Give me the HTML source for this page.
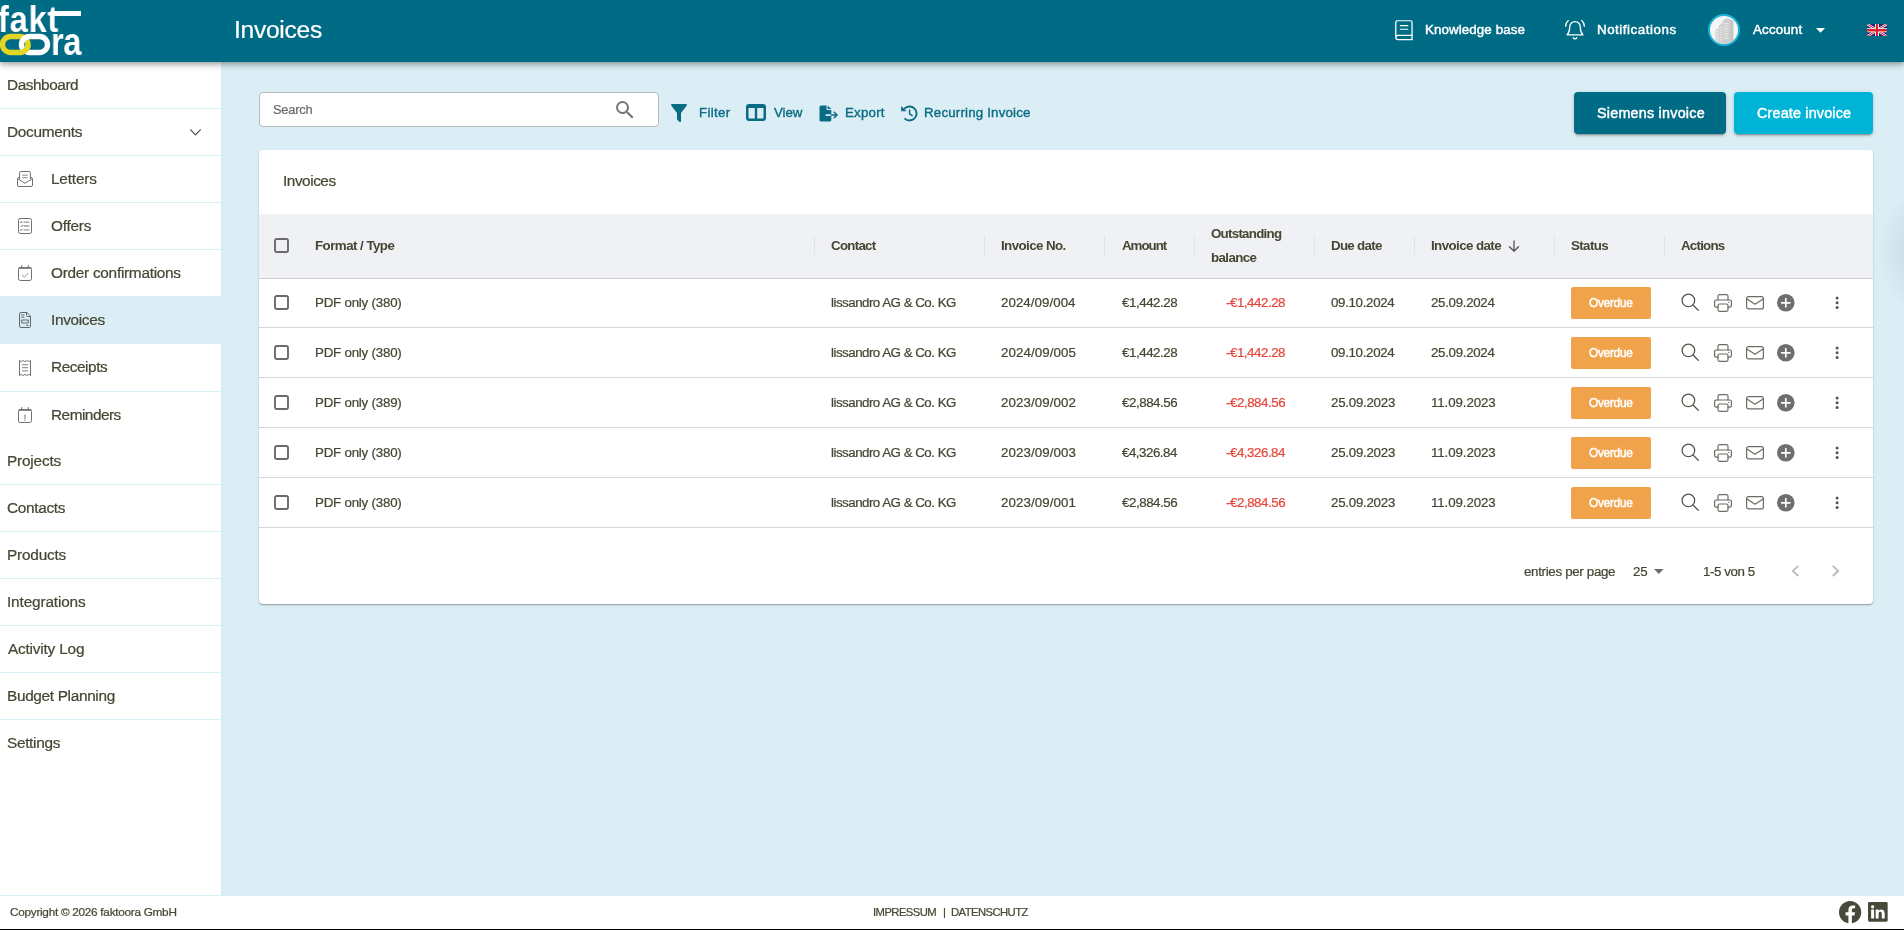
<!DOCTYPE html>
<html lang="en"><head><meta charset="utf-8"><title>Invoices</title>
<style>
*{box-sizing:border-box;margin:0;padding:0}
html,body{width:1904px;height:930px;overflow:hidden;background:#dbeef5;font-family:"Liberation Sans",sans-serif;position:relative}
.a{position:absolute}
.t{will-change:transform;position:absolute;white-space:pre;line-height:1;font-family:"Liberation Sans",sans-serif}
#hdr{left:0;top:0;width:1904px;height:62px;background:#006b84;box-shadow:0 2px 4px -1px rgba(0,0,0,.2),0 4px 5px 0 rgba(0,0,0,.14),0 1px 10px 0 rgba(0,0,0,.12);}
#side{left:0;top:62px;width:222px;height:834px;background:#fff;border-right:1px solid #d4ebf2}
.sl{left:0;width:221px;height:1px;background:#d9edf4}
#sel{left:0;top:296px;width:221px;height:48px;background:#dbeef5}
#foot{left:0;top:895px;width:1904px;height:34px;background:#fff;border-top:1px solid #d9edf4}
#bl{left:0;top:929px;width:1904px;height:1px;background:#000}
#search{left:259px;top:92px;width:400px;height:35px;background:#fff;border:1px solid #b9b9b9;border-radius:4px}
.btn{top:92px;height:42px;border-radius:4px;box-shadow:0 3px 1px -2px rgba(0,0,0,.2),0 2px 2px 0 rgba(0,0,0,.14),0 1px 5px 0 rgba(0,0,0,.12)}
#card{left:259px;top:150px;width:1614px;height:454px;background:#fff;border-radius:4px;box-shadow:0 1px 1px rgba(0,0,0,.28),0 1px 3px rgba(0,0,0,.10)}
#thead{left:259px;top:214px;width:1614px;height:64px;background:#f0f1f4}
.hl{left:259px;width:1614px;height:1px;background:#d6d6d6}
.sep{top:236px;width:1px;height:19px;background:#e2e3e6}
.cb{left:275px;width:15px;height:15px;border:2px solid #55565a;border-radius:2.5px;background:transparent}
.od{left:1571px;width:80px;height:32px;border-radius:2px;background:#f1a34c}
svg{position:absolute;overflow:visible}

</style></head>
<body>
<div class="a" id="side"></div>
<div class="a" id="sel"></div>
<div class="a" id="hdr"></div>
<div class="a" id="foot"></div>
<div class="a" id="bl"></div>
<div class="a" id="search"></div>
<div class="a btn" style="left:1574px;width:152px;background:#006b84"></div>
<div class="a btn" style="left:1734px;width:139px;background:#00b4d8"></div>
<div class="a" id="card"></div>
<div class="a" id="thead"></div>
<div class="a sl" style="top:108px"></div>
<div class="a sl" style="top:155px"></div>
<div class="a sl" style="top:202px"></div>
<div class="a sl" style="top:249px"></div>
<div class="a sl" style="top:391px"></div>
<div class="a sl" style="top:484px"></div>
<div class="a sl" style="top:531px"></div>
<div class="a sl" style="top:578px"></div>
<div class="a sl" style="top:625px"></div>
<div class="a sl" style="top:672px"></div>
<div class="a sl" style="top:719px"></div>

<div class="a hl" style="top:278px;background:#cfcfcf"></div>
<div class="a hl" style="top:327px"></div>
<div class="a hl" style="top:377px"></div>
<div class="a hl" style="top:427px"></div>
<div class="a hl" style="top:477px"></div>
<div class="a hl" style="top:527px"></div>

<div class="a sep" style="left:814px"></div>
<div class="a sep" style="left:984px"></div>
<div class="a sep" style="left:1104px"></div>
<div class="a sep" style="left:1194px"></div>
<div class="a sep" style="left:1314px"></div>
<div class="a sep" style="left:1414px"></div>
<div class="a sep" style="left:1554px"></div>
<div class="a sep" style="left:1664px"></div>


<div class="a od" style="top:287px"></div>
<div class="a od" style="top:337px"></div>
<div class="a od" style="top:387px"></div>
<div class="a od" style="top:437px"></div>
<div class="a od" style="top:487px"></div>

<svg style="left:274.4px;top:238.4px" width="15" height="15" viewBox="0 0 15 15"><rect x="1" y="1" width="13" height="13" rx="1.800" fill="none" stroke="#6a6a6a" stroke-width="1.900"/></svg>
<svg style="left:274.4px;top:295.3px" width="15" height="15" viewBox="0 0 15 15"><rect x="1" y="1" width="13" height="13" rx="1.800" fill="none" stroke="#6a6a6a" stroke-width="1.900"/></svg>
<svg style="left:274.4px;top:345.3px" width="15" height="15" viewBox="0 0 15 15"><rect x="1" y="1" width="13" height="13" rx="1.800" fill="none" stroke="#6a6a6a" stroke-width="1.900"/></svg>
<svg style="left:274.4px;top:395.3px" width="15" height="15" viewBox="0 0 15 15"><rect x="1" y="1" width="13" height="13" rx="1.800" fill="none" stroke="#6a6a6a" stroke-width="1.900"/></svg>
<svg style="left:274.4px;top:445.3px" width="15" height="15" viewBox="0 0 15 15"><rect x="1" y="1" width="13" height="13" rx="1.800" fill="none" stroke="#6a6a6a" stroke-width="1.900"/></svg>
<svg style="left:274.4px;top:495.3px" width="15" height="15" viewBox="0 0 15 15"><rect x="1" y="1" width="13" height="13" rx="1.800" fill="none" stroke="#6a6a6a" stroke-width="1.900"/></svg>
<!-- LOGO -->
<span class="t" style="left:-2px;top:2px;font-size:36px;font-weight:700;color:#fff;transform:scaleX(.9);transform-origin:0 0;line-height:1;letter-spacing:1px" id="lg1">fakt</span>
<div class="a" style="left:52px;top:11px;width:29px;height:4.5px;background:#fff"></div>
<span class="t" style="left:51px;top:22.6px;font-size:38px;font-weight:700;color:#fff;transform:scaleX(.86);transform-origin:0 0;line-height:1;letter-spacing:-.5px" id="lg2">ra</span>
<svg style="left:0;top:30px" width="56" height="30" viewBox="0 30 56 30">
  <rect x="2.5" y="36.5" width="25.5" height="16" rx="8" ry="8" fill="none" stroke="#e2d523" stroke-width="5.4"/>
  <rect x="21.5" y="36.5" width="26" height="16" rx="8" ry="8" fill="none" stroke="#fff" stroke-width="5.4"/>
  <path d="M28 44.5 A8 8 0 0 1 20 52.5" fill="none" stroke="#e2d523" stroke-width="5.4"/>
</svg>

<!-- HEADER: book -->
<svg style="left:1395px;top:20px" width="18.6" height="20.2" viewBox="0 0 19 21.4" preserveAspectRatio="none" fill="none" stroke="#fff" stroke-width="1.3" stroke-linecap="round" stroke-linejoin="round">
  <path d="M.8 17.2V2.6a1.8 1.8 0 0 1 1.8-1.8h13.6a1.2 1.2 0 0 1 1.200 1.200v14.4H3.100a2.200 2.200 0 0 0 0 4.400h14.300"/>
  <path d="M17.400 16.400v4.400"/>
  <path d="M5.500 6h7.600M5.500 9.800h7.600"/>
</svg>
<!-- HEADER: bell -->
<svg style="left:1564px;top:19px" width="22" height="22" viewBox="0 0 22 22" fill="none" stroke="#fff" stroke-width="1.3" stroke-linecap="round" stroke-linejoin="round">
  <path d="M11 2.600c-3.300 0-5.300 2.500-5.300 5.600 0 4.200-1.400 6.400-2.600 7.700h15.800c-1.200-1.300-2.600-3.500-2.600-7.700 0-3.100-2-5.600-5.300-5.600z"/>
  <path d="M9.300 18.700a1.800 1.800 0 0 0 3.400 0"/>
  <path d="M4.300 1.600C2.700 3 1.700 5 1.600 7.200M17.700 1.600c1.600 1.400 2.600 3.400 2.700 5.600"/>
</svg>
<!-- avatar -->
<div class="a" style="left:1708px;top:14px;width:32px;height:32px;border-radius:50%;background:#f6f6f6;border:2px solid #1ab3d6;overflow:hidden">
<svg style="left:0;top:0" width="28" height="28" viewBox="1710 16 28 28">
  <path d="M1715.300 44V29.500l3.900-1.600V44z" fill="#d9d9d9"/>
  <path d="M1718.700 44V25.200l5-2.600V44z" fill="#d2d2d2"/>
  <path d="M1722.600 44V20.500l4.400-2.200 6.300 2.400V44z" fill="#cfcfcf"/>
  <path d="M1727 18.300l6.300 2.400V44H1730V20.200z" fill="#c6c6c6"/>
  <path d="M1716.200 31.500h2M1716.200 33.800h2M1716.200 36.100h2M1716.200 38.400h2M1719.700 27.500h2.600M1719.700 30h2.600M1719.700 32.500h2.600M1719.700 35h2.600M1719.700 37.500h2.600M1719.700 40h2.600M1723.800 23.500h4.500M1723.800 26h4.500M1723.800 28.500h4.500M1723.800 31h4.500M1723.800 33.500h4.500M1723.800 36h4.500M1723.800 38.500h4.500" stroke="#e9e9e9" stroke-width=".9"/>
</svg>
</div>
<!-- account caret -->
<svg style="left:1816px;top:28px" width="9" height="5" viewBox="0 0 9 5"><path d="M0 0h9L4.500 4.800z" fill="#fff"/></svg>
<!-- flag -->
<svg style="left:1867px;top:24px;overflow:hidden" width="20" height="12.400" viewBox="0 0 60 36" preserveAspectRatio="none">
  <rect width="60" height="36" fill="#1b2a7a"/>
  <path d="M0 0L60 36M60 0L0 36" stroke="#fff" stroke-width="7"/>
  <path d="M0 0L60 36M60 0L0 36" stroke="#d8232f" stroke-width="3"/>
  <path d="M30 0V36M0 18H60" stroke="#fff" stroke-width="12"/>
  <path d="M30 0V36M0 18H60" stroke="#d8232f" stroke-width="7"/>
</svg>

<!-- search magnifier (mdi-magnify 24) -->
<svg style="left:613px;top:98.400px" width="24" height="24" viewBox="0 0 24 24"><path fill="#767676" d="M9.500,3A6.500,6.500 0 0,1 16,9.500C16,11.110 15.410,12.590 14.440,13.730L14.710,14H15.500L20.500,19L19,20.500L14,15.500V14.710L13.730,14.440C12.590,15.410 11.110,16 9.500,16A6.500,6.500 0 0,1 3,9.500A6.500,6.500 0 0,1 9.500,3M9.500,5C7,5 5,7 5,9.500C5,12 7,14 9.500,14C12,14 14,12 14,9.500C14,7 12,5 9.500,5Z"/></svg>
<!-- filter (mdi-filter 24) -->
<svg style="left:667px;top:101px" width="24" height="24" viewBox="0 0 24 24"><path fill="#0a6c84" d="M14,12V19.880C14.040,20.180 13.940,20.500 13.710,20.710C13.320,21.100 12.690,21.100 12.300,20.710L10.290,18.700C10.060,18.470 9.960,18.160 10,17.870V12H9.970L4.210,4.620C3.870,4.190 3.950,3.560 4.380,3.220C4.570,3.080 4.780,3 5,3V3H19V3C19.220,3 19.430,3.080 19.620,3.220C20.050,3.560 20.130,4.190 19.790,4.620L14.030,12H14Z"/></svg>
<!-- view columns -->
<svg style="left:745.500px;top:104px" width="20" height="17" viewBox="0 0 20 17"><path fill="#0a6c84" fill-rule="evenodd" d="M3 0h14a3 3 0 0 1 3 3v11a3 3 0 0 1-3 3H3a3 3 0 0 1-3-3V3a3 3 0 0 1 3-3zM2.500 4v9.500a1 1 0 0 0 1 1H8.800V4zM11.200 4v10.500h5.300a1 1 0 0 0 1-1V4z"/></svg>
<!-- export -->
<svg style="left:818.500px;top:104.500px" width="19" height="17" viewBox="0 0 19 17">
<path fill="#0a6c84" d="M2 .5H7.600V4.900H12.300V9.200H6.600V10.900H12.300V15a1.500 1.500 0 0 1-1.500 1.500H2A1.500 1.500 0 0 1 .5 15V2A1.500 1.500 0 0 1 2 .5z"/>
<path fill="#0a6c84" d="M8.600.6 12.200 4H8.600z"/>
<path d="M12.300 10.050H17.300M15.200 7.300 18.100 10.050 15.200 12.800" fill="none" stroke="#0a6c84" stroke-width="1.500" stroke-linecap="round" stroke-linejoin="round"/>
</svg>
<!-- history -->
<svg style="left:900.500px;top:104.800px" width="17" height="17" viewBox="0 0 17 17">
<path d="M3.300 3.900A7 7 0 1 1 3.500 13.300" fill="none" stroke="#0a6c84" stroke-width="1.900" stroke-linecap="butt"/>
<path d="M.2.900V6.300H5.600z" fill="#0a6c84"/>
<path d="M8.600 4.900V8.900L11.200 10.600" fill="none" stroke="#0a6c84" stroke-width="1.500" stroke-linecap="round" stroke-linejoin="round"/>
</svg>
<svg style="left:189.500px;top:129px" width="11" height="7" viewBox="0 0 11 7" fill="none" stroke="#4a4a4a" stroke-width="1.200" stroke-linecap="round" stroke-linejoin="round"><path d="M.7.8 5.500 5.800 10.300.8"/></svg>
<svg style="left:17px;top:170.700px" width="16" height="16" viewBox="0 0 16 16" fill="none" stroke="#6f6f6f" stroke-width="1" stroke-linecap="round" stroke-linejoin="round"><path d="M2.600 7.500V1.700A1.200 1.200 0 0 1 3.800.5h8.400a1.200 1.200 0 0 1 1.200 1.200V7.500"/><path d="M2.600 5.900 1 6.900a1 1 0 0 0-.5.900V14A1.500 1.500 0 0 0 2 15.500h12A1.500 1.500 0 0 0 15.500 14V7.800a1 1 0 0 0-.5-.9L13.400 5.900"/><path d="M.8 7.700 8 12.300l7.200-4.600"/><path d="M5.600 4.200h4.800M5.600 6.700h4.800" stroke="#8a8a8a"/></svg>
<svg style="left:18px;top:217.900px" width="14" height="16" viewBox="0 0 14 16" fill="none" stroke="#6f6f6f" stroke-width="1" stroke-linecap="round" stroke-linejoin="round"><rect x=".5" y=".5" width="13" height="15" rx="1.800"/><path d="M6 4.200h5M6 8h5M6 11.800h5" stroke-width="1.300" stroke="#9a9a9a"/><path d="M2.800 4.200h1M2.800 11.800h1" stroke-width="1.300"/><path d="M2.600 8.100l.8.800 1.300-1.600" stroke-width=".9"/></svg>
<svg style="left:18px;top:265px" width="14" height="16" viewBox="0 0 14 16" fill="none" stroke="#6f6f6f" stroke-width="1" stroke-linecap="round" stroke-linejoin="round"><rect x=".5" y="2.700" width="13" height="12.800" rx="1.800"/><path d="M1.200 3.100h11.600" stroke-width="1.500"/><path d="M3.700.5v2.200M10.300.5v2.200"/><path d="M4.300 10.100l2.100 2 3.800-3.900" stroke="#8f8f8f"/></svg>
<svg style="left:19px;top:311.900px" width="12" height="16" viewBox="0 0 12 16" fill="none" stroke="#5f6a6e" stroke-width="1" stroke-linecap="round" stroke-linejoin="round"><path d="M7.500.5H2A1.500 1.500 0 0 0 .5 2v12A1.500 1.500 0 0 0 2 15.500h8a1.500 1.500 0 0 0 1.500-1.500V4.500z"/><path d="M7.500.5v3a1 1 0 0 0 1 1h3"/><rect x="2.700" y="8" width="6.600" height="3" rx=".5" stroke-width="1.100"/><path d="M2.500 3h2.500M2.500 5.200h2.500M7.300 13.300h2"/></svg>
<svg style="left:19px;top:360px" width="12" height="16" viewBox="0 0 12 16" fill="none" stroke="#6f6f6f" stroke-width="1" stroke-linejoin="round"><path d="M.5.300 2.300 1.700 4.200.4 6 1.700 7.800.4 9.700 1.700 11.500.300V15.700L9.700 14.300 7.800 15.600 6 14.300 4.200 15.600 2.300 14.300.5 15.700z"/><path d="M2.900 4.600h6.200M2.900 7.700h6.200M2.900 10.800h6.200" stroke="#9a9a9a" stroke-width="1.300"/></svg>
<svg style="left:18px;top:407px" width="14" height="16" viewBox="0 0 14 16" fill="none" stroke="#6f6f6f" stroke-width="1" stroke-linecap="round" stroke-linejoin="round"><rect x=".5" y="2.700" width="13" height="12.800" rx="1.800"/><path d="M1.200 3.100h11.600" stroke-width="1.500"/><path d="M3.700.5v2.200M10.300.5v2.200"/><path d="M7 8v3.300M7 13v.3" stroke="#8f8f8f" stroke-width="1.300"/></svg>
<svg style="left:1508px;top:240px" width="12" height="12" viewBox="0 0 12 12" fill="none" stroke="#55564c" stroke-width="1.300" stroke-linecap="round" stroke-linejoin="round"><path d="M6 .8v10M1.500 6.800 6 11.200l4.500-4.400"/></svg>
<svg style="left:1680.800px;top:292.9px" width="18" height="18" viewBox="0 0 18 18" fill="none" stroke="#55564c" stroke-width="1.300" stroke-linecap="round"><circle cx="7.400" cy="7.400" r="6.300"/><path d="M12 12l5.300 5.300"/></svg>
<svg style="left:1713.500px;top:293.8px" width="18" height="18" viewBox="0 0 18 18" fill="none" stroke="#6b6c62" stroke-width="1.200" stroke-linejoin="round" stroke-linecap="round"><path d="M4 6V2.200A1.500 1.500 0 0 1 5.500.7h7A1.500 1.500 0 0 1 14 2.200V6"/><path d="M4 13.200H2.200A1.600 1.600 0 0 1 .6 11.600V7.600A1.600 1.600 0 0 1 2.200 6h13.600a1.600 1.600 0 0 1 1.600 1.600v4A1.600 1.600 0 0 1 15.800 13.200H14"/><rect x="4" y="10" width="10" height="7.300" rx="1.500"/><path d="M14.600 8.300h.2" stroke-width="1.300"/></svg>
<svg style="left:1746px;top:296px" width="18" height="14" viewBox="0 0 18 14" fill="none" stroke="#6b6c62" stroke-width="1.200" stroke-linejoin="round" stroke-linecap="round"><rect x=".6" y=".6" width="16.800" height="12.300" rx="2"/><path d="M.9 3l8.100 5.200L17.100 3"/></svg>
<svg style="left:1776.900px;top:293.9px" width="17.600" height="17.600" viewBox="0 0 18 18"><circle cx="9" cy="9" r="9" fill="#6e6e6e"/><path d="M9 4.700v8.600M4.700 9h8.600" stroke="#fff" stroke-width="1.700" stroke-linecap="round"/></svg>
<svg style="left:1835px;top:296px" width="4" height="14" viewBox="0 0 4 14" fill="#55564c"><circle cx="2.100" cy="2.100" r="1.500"/><circle cx="2.100" cy="6.800" r="1.500"/><circle cx="2.100" cy="11.500" r="1.500"/></svg>
<svg style="left:1680.800px;top:342.9px" width="18" height="18" viewBox="0 0 18 18" fill="none" stroke="#55564c" stroke-width="1.300" stroke-linecap="round"><circle cx="7.400" cy="7.400" r="6.300"/><path d="M12 12l5.300 5.300"/></svg>
<svg style="left:1713.500px;top:343.8px" width="18" height="18" viewBox="0 0 18 18" fill="none" stroke="#6b6c62" stroke-width="1.200" stroke-linejoin="round" stroke-linecap="round"><path d="M4 6V2.200A1.500 1.500 0 0 1 5.500.7h7A1.500 1.500 0 0 1 14 2.200V6"/><path d="M4 13.200H2.200A1.600 1.600 0 0 1 .6 11.600V7.600A1.600 1.600 0 0 1 2.200 6h13.600a1.600 1.600 0 0 1 1.600 1.600v4A1.600 1.600 0 0 1 15.800 13.200H14"/><rect x="4" y="10" width="10" height="7.300" rx="1.500"/><path d="M14.600 8.300h.2" stroke-width="1.300"/></svg>
<svg style="left:1746px;top:346px" width="18" height="14" viewBox="0 0 18 14" fill="none" stroke="#6b6c62" stroke-width="1.200" stroke-linejoin="round" stroke-linecap="round"><rect x=".6" y=".6" width="16.800" height="12.300" rx="2"/><path d="M.9 3l8.100 5.200L17.100 3"/></svg>
<svg style="left:1776.900px;top:343.9px" width="17.600" height="17.600" viewBox="0 0 18 18"><circle cx="9" cy="9" r="9" fill="#6e6e6e"/><path d="M9 4.700v8.600M4.700 9h8.600" stroke="#fff" stroke-width="1.700" stroke-linecap="round"/></svg>
<svg style="left:1835px;top:346px" width="4" height="14" viewBox="0 0 4 14" fill="#55564c"><circle cx="2.100" cy="2.100" r="1.500"/><circle cx="2.100" cy="6.800" r="1.500"/><circle cx="2.100" cy="11.500" r="1.500"/></svg>
<svg style="left:1680.800px;top:392.9px" width="18" height="18" viewBox="0 0 18 18" fill="none" stroke="#55564c" stroke-width="1.300" stroke-linecap="round"><circle cx="7.400" cy="7.400" r="6.300"/><path d="M12 12l5.300 5.300"/></svg>
<svg style="left:1713.500px;top:393.8px" width="18" height="18" viewBox="0 0 18 18" fill="none" stroke="#6b6c62" stroke-width="1.200" stroke-linejoin="round" stroke-linecap="round"><path d="M4 6V2.200A1.500 1.500 0 0 1 5.500.7h7A1.500 1.500 0 0 1 14 2.200V6"/><path d="M4 13.200H2.200A1.600 1.600 0 0 1 .6 11.600V7.600A1.600 1.600 0 0 1 2.200 6h13.600a1.600 1.600 0 0 1 1.600 1.600v4A1.600 1.600 0 0 1 15.800 13.200H14"/><rect x="4" y="10" width="10" height="7.300" rx="1.500"/><path d="M14.600 8.300h.2" stroke-width="1.300"/></svg>
<svg style="left:1746px;top:396px" width="18" height="14" viewBox="0 0 18 14" fill="none" stroke="#6b6c62" stroke-width="1.200" stroke-linejoin="round" stroke-linecap="round"><rect x=".6" y=".6" width="16.800" height="12.300" rx="2"/><path d="M.9 3l8.100 5.200L17.100 3"/></svg>
<svg style="left:1776.900px;top:393.9px" width="17.600" height="17.600" viewBox="0 0 18 18"><circle cx="9" cy="9" r="9" fill="#6e6e6e"/><path d="M9 4.700v8.600M4.700 9h8.600" stroke="#fff" stroke-width="1.700" stroke-linecap="round"/></svg>
<svg style="left:1835px;top:396px" width="4" height="14" viewBox="0 0 4 14" fill="#55564c"><circle cx="2.100" cy="2.100" r="1.500"/><circle cx="2.100" cy="6.800" r="1.500"/><circle cx="2.100" cy="11.500" r="1.500"/></svg>
<svg style="left:1680.800px;top:442.9px" width="18" height="18" viewBox="0 0 18 18" fill="none" stroke="#55564c" stroke-width="1.300" stroke-linecap="round"><circle cx="7.400" cy="7.400" r="6.300"/><path d="M12 12l5.300 5.300"/></svg>
<svg style="left:1713.500px;top:443.8px" width="18" height="18" viewBox="0 0 18 18" fill="none" stroke="#6b6c62" stroke-width="1.200" stroke-linejoin="round" stroke-linecap="round"><path d="M4 6V2.200A1.500 1.500 0 0 1 5.500.7h7A1.500 1.500 0 0 1 14 2.200V6"/><path d="M4 13.200H2.200A1.600 1.600 0 0 1 .6 11.600V7.600A1.600 1.600 0 0 1 2.200 6h13.600a1.600 1.600 0 0 1 1.600 1.600v4A1.600 1.600 0 0 1 15.800 13.200H14"/><rect x="4" y="10" width="10" height="7.300" rx="1.500"/><path d="M14.600 8.300h.2" stroke-width="1.300"/></svg>
<svg style="left:1746px;top:446px" width="18" height="14" viewBox="0 0 18 14" fill="none" stroke="#6b6c62" stroke-width="1.200" stroke-linejoin="round" stroke-linecap="round"><rect x=".6" y=".6" width="16.800" height="12.300" rx="2"/><path d="M.9 3l8.100 5.200L17.100 3"/></svg>
<svg style="left:1776.900px;top:443.9px" width="17.600" height="17.600" viewBox="0 0 18 18"><circle cx="9" cy="9" r="9" fill="#6e6e6e"/><path d="M9 4.700v8.600M4.700 9h8.600" stroke="#fff" stroke-width="1.700" stroke-linecap="round"/></svg>
<svg style="left:1835px;top:446px" width="4" height="14" viewBox="0 0 4 14" fill="#55564c"><circle cx="2.100" cy="2.100" r="1.500"/><circle cx="2.100" cy="6.800" r="1.500"/><circle cx="2.100" cy="11.500" r="1.500"/></svg>
<svg style="left:1680.800px;top:492.9px" width="18" height="18" viewBox="0 0 18 18" fill="none" stroke="#55564c" stroke-width="1.300" stroke-linecap="round"><circle cx="7.400" cy="7.400" r="6.300"/><path d="M12 12l5.300 5.300"/></svg>
<svg style="left:1713.500px;top:493.8px" width="18" height="18" viewBox="0 0 18 18" fill="none" stroke="#6b6c62" stroke-width="1.200" stroke-linejoin="round" stroke-linecap="round"><path d="M4 6V2.200A1.500 1.500 0 0 1 5.500.7h7A1.500 1.500 0 0 1 14 2.200V6"/><path d="M4 13.200H2.200A1.600 1.600 0 0 1 .6 11.600V7.600A1.600 1.600 0 0 1 2.200 6h13.600a1.600 1.600 0 0 1 1.600 1.600v4A1.600 1.600 0 0 1 15.800 13.200H14"/><rect x="4" y="10" width="10" height="7.300" rx="1.500"/><path d="M14.600 8.300h.2" stroke-width="1.300"/></svg>
<svg style="left:1746px;top:496px" width="18" height="14" viewBox="0 0 18 14" fill="none" stroke="#6b6c62" stroke-width="1.200" stroke-linejoin="round" stroke-linecap="round"><rect x=".6" y=".6" width="16.800" height="12.300" rx="2"/><path d="M.9 3l8.100 5.200L17.100 3"/></svg>
<svg style="left:1776.900px;top:493.9px" width="17.600" height="17.600" viewBox="0 0 18 18"><circle cx="9" cy="9" r="9" fill="#6e6e6e"/><path d="M9 4.700v8.600M4.700 9h8.600" stroke="#fff" stroke-width="1.700" stroke-linecap="round"/></svg>
<svg style="left:1835px;top:496px" width="4" height="14" viewBox="0 0 4 14" fill="#55564c"><circle cx="2.100" cy="2.100" r="1.500"/><circle cx="2.100" cy="6.800" r="1.500"/><circle cx="2.100" cy="11.500" r="1.500"/></svg>
<svg style="left:1654.400px;top:569px" width="9.600" height="5" viewBox="0 0 10 5"><path d="M0 0h10L5 5z" fill="#6a6a6a"/></svg>
<svg style="left:1790.500px;top:565px" width="9" height="12" viewBox="0 0 9 12" fill="none" stroke="#b9b9b9" stroke-width="1.800" stroke-linecap="butt" stroke-linejoin="miter"><path d="M7.300.800 1.800 5.900 7.300 11"/></svg>
<svg style="left:1830.500px;top:565px" width="9" height="12" viewBox="0 0 9 12" fill="none" stroke="#b9b9b9" stroke-width="1.800" stroke-linecap="butt" stroke-linejoin="miter"><path d="M1.700.800 7.200 5.900 1.700 11"/></svg>
<svg style="left:1839px;top:901px" width="22.300" height="22.300" viewBox="0 0 16 16"><path fill="#47493a" d="M16 8.049c0-4.446-3.582-8.050-8-8.050C3.580 0-.002 3.603-.002 8.050c0 4.017 2.926 7.347 6.750 7.951v-5.625h-2.030V8.050H6.750V6.275c0-2.017 1.195-3.131 3.022-3.131.876 0 1.791.157 1.791.157v1.980h-1.009c-.993 0-1.303.621-1.303 1.258v1.510h2.218l-.354 2.326H9.250V16c3.824-.604 6.750-3.934 6.750-7.951z"/></svg>
<svg style="left:1868.300px;top:902.300px" width="19.700" height="19.700" viewBox="0 0 16 16"><path fill="#47493a" d="M0 1.146C0 .513.526 0 1.175 0h13.650C15.474 0 16 .513 16 1.146v13.708c0 .633-.526 1.146-1.175 1.146H1.175C.526 16 0 15.487 0 14.854V1.146zm4.943 12.248V6.169H2.542v7.225h2.401zm-1.200-8.212c.837 0 1.358-.554 1.358-1.248-.015-.709-.52-1.248-1.342-1.248-.822 0-1.359.54-1.359 1.248 0 .694.521 1.248 1.327 1.248h.016zm4.908 8.212V9.359c0-.216.016-.432.080-.586.173-.431.568-.878 1.232-.878.869 0 1.216.662 1.216 1.634v3.865h2.401V9.250c0-2.220-1.184-3.252-2.764-3.252-1.274 0-1.845.7-2.165 1.193v.025h-.016a5.540 5.540 0 0 1 .016-.025V6.169h-2.400c.03.678 0 7.225 0 7.225h2.400z"/></svg>
<div class="a" style="left:1873px;top:176px;width:31px;height:150px;background:radial-gradient(circle 72px at 76px 50%, rgba(95,125,135,.33) 0, rgba(95,125,135,.21) 40%, rgba(95,125,135,.09) 70%, rgba(95,125,135,0) 100%)"></div>


<span class="t" style="left:234.03px;top:18.00px;font-size:24.6px;font-weight:400;color:#fff;letter-spacing:-0.288px;-webkit-text-stroke:0.22px #fff;">Invoices</span>
<span class="t" style="left:1425.08px;top:23.00px;font-size:13.32px;font-weight:400;color:#fff;letter-spacing:0.112px;-webkit-text-stroke:0.45px #fff;">Knowledge base</span>
<span class="t" style="left:1596.98px;top:23.00px;font-size:13.32px;font-weight:400;color:#fff;letter-spacing:0.545px;-webkit-text-stroke:0.45px #fff;">Notifications</span>
<span class="t" style="left:1752.74px;top:23.00px;font-size:13.32px;font-weight:400;color:#fff;letter-spacing:0.175px;-webkit-text-stroke:0.45px #fff;">Account</span>
<span class="t" style="left:6.73px;top:77.00px;font-size:15.37px;font-weight:400;color:#454733;letter-spacing:-0.435px;-webkit-text-stroke:0.22px #454733;">Dashboard</span>
<span class="t" style="left:6.73px;top:124.00px;font-size:15.37px;font-weight:400;color:#454733;letter-spacing:-0.282px;-webkit-text-stroke:0.22px #454733;">Documents</span>
<span class="t" style="left:50.73px;top:171.00px;font-size:15.37px;font-weight:400;color:#454733;letter-spacing:-0.173px;-webkit-text-stroke:0.22px #454733;">Letters</span>
<span class="t" style="left:51.33px;top:218.00px;font-size:15.37px;font-weight:400;color:#454733;letter-spacing:-0.246px;-webkit-text-stroke:0.22px #454733;">Offers</span>
<span class="t" style="left:51.33px;top:265.00px;font-size:15.37px;font-weight:400;color:#454733;letter-spacing:-0.268px;-webkit-text-stroke:0.22px #454733;">Order confirmations</span>
<span class="t" style="left:50.61px;top:312.00px;font-size:15.37px;font-weight:400;color:#454733;letter-spacing:-0.316px;-webkit-text-stroke:0.22px #454733;">Invoices</span>
<span class="t" style="left:50.73px;top:359.00px;font-size:15.37px;font-weight:400;color:#454733;letter-spacing:-0.435px;-webkit-text-stroke:0.22px #454733;">Receipts</span>
<span class="t" style="left:50.73px;top:407.00px;font-size:15.37px;font-weight:400;color:#454733;letter-spacing:-0.497px;-webkit-text-stroke:0.22px #454733;">Reminders</span>
<span class="t" style="left:6.73px;top:453.00px;font-size:15.37px;font-weight:400;color:#454733;letter-spacing:-0.183px;-webkit-text-stroke:0.22px #454733;">Projects</span>
<span class="t" style="left:7.30px;top:500.00px;font-size:15.37px;font-weight:400;color:#454733;letter-spacing:-0.299px;-webkit-text-stroke:0.22px #454733;">Contacts</span>
<span class="t" style="left:6.73px;top:547.00px;font-size:15.37px;font-weight:400;color:#454733;letter-spacing:-0.196px;-webkit-text-stroke:0.22px #454733;">Products</span>
<span class="t" style="left:6.61px;top:594.00px;font-size:15.37px;font-weight:400;color:#454733;letter-spacing:-0.147px;-webkit-text-stroke:0.22px #454733;">Integrations</span>
<span class="t" style="left:7.75px;top:641.00px;font-size:15.37px;font-weight:400;color:#454733;letter-spacing:-0.192px;-webkit-text-stroke:0.22px #454733;">Activity Log</span>
<span class="t" style="left:6.73px;top:688.00px;font-size:15.37px;font-weight:400;color:#454733;letter-spacing:-0.324px;-webkit-text-stroke:0.22px #454733;">Budget Planning</span>
<span class="t" style="left:7.17px;top:735.00px;font-size:15.37px;font-weight:400;color:#454733;letter-spacing:-0.313px;-webkit-text-stroke:0.22px #454733;">Settings</span>
<span class="t" style="left:272.98px;top:104.00px;font-size:12.81px;font-weight:400;color:#6a6a6a;letter-spacing:-0.164px;-webkit-text-stroke:0.22px #6a6a6a;">Search</span>
<span class="t" style="left:698.89px;top:106.00px;font-size:13.32px;font-weight:400;color:#0a6c84;letter-spacing:0.304px;-webkit-text-stroke:0.38px #0a6c84;">Filter</span>
<span class="t" style="left:773.81px;top:106.00px;font-size:13.32px;font-weight:400;color:#0a6c84;letter-spacing:-0.060px;-webkit-text-stroke:0.38px #0a6c84;">View</span>
<span class="t" style="left:844.59px;top:106.00px;font-size:13.32px;font-weight:400;color:#0a6c84;letter-spacing:0.205px;-webkit-text-stroke:0.38px #0a6c84;">Export</span>
<span class="t" style="left:924.39px;top:106.00px;font-size:13.32px;font-weight:400;color:#0a6c84;letter-spacing:0.181px;-webkit-text-stroke:0.38px #0a6c84;">Recurring Invoice</span>
<span class="t" style="left:1596.62px;top:106.00px;font-size:14.35px;font-weight:400;color:#fff;letter-spacing:0.228px;-webkit-text-stroke:0.45px #fff;">Siemens invoice</span>
<span class="t" style="left:1756.61px;top:106.00px;font-size:14.35px;font-weight:400;color:#fff;letter-spacing:0.184px;-webkit-text-stroke:0.45px #fff;">Create invoice</span>
<span class="t" style="left:282.51px;top:173.00px;font-size:15.37px;font-weight:400;color:#454733;letter-spacing:-0.459px;-webkit-text-stroke:0.22px #454733;">Invoices</span>
<span class="t" style="left:314.95px;top:239.00px;font-size:13.32px;font-weight:700;color:#454733;letter-spacing:-0.537px;">Format / Type</span>
<span class="t" style="left:831.10px;top:239.00px;font-size:13.32px;font-weight:700;color:#454733;letter-spacing:-0.725px;">Contact</span>
<span class="t" style="left:1000.70px;top:239.00px;font-size:13.32px;font-weight:700;color:#454733;letter-spacing:-0.582px;">Invoice No.</span>
<span class="t" style="left:1121.67px;top:239.00px;font-size:13.32px;font-weight:700;color:#454733;letter-spacing:-0.998px;">Amount</span>
<span class="t" style="left:1211.10px;top:227.00px;font-size:13.32px;font-weight:700;color:#454733;letter-spacing:-0.734px;">Outstanding</span>
<span class="t" style="left:1210.70px;top:251.00px;font-size:13.32px;font-weight:700;color:#454733;letter-spacing:-0.610px;">balance</span>
<span class="t" style="left:1330.70px;top:239.00px;font-size:13.32px;font-weight:700;color:#454733;letter-spacing:-0.697px;">Due date</span>
<span class="t" style="left:1430.70px;top:239.00px;font-size:13.32px;font-weight:700;color:#454733;letter-spacing:-0.579px;">Invoice date</span>
<span class="t" style="left:1570.96px;top:239.00px;font-size:13.32px;font-weight:700;color:#454733;letter-spacing:-0.604px;">Status</span>
<span class="t" style="left:1681.12px;top:239.00px;font-size:13.32px;font-weight:700;color:#454733;letter-spacing:-0.773px;">Actions</span>
<span class="t" style="left:314.86px;top:296.00px;font-size:13.32px;font-weight:400;color:#454733;letter-spacing:-0.211px;-webkit-text-stroke:0.22px #454733;">PDF only (380)</span>
<span class="t" style="left:831.00px;top:296.00px;font-size:13.32px;font-weight:400;color:#454733;letter-spacing:-0.500px;-webkit-text-stroke:0.22px #454733;">lissandro AG & Co. KG</span>
<span class="t" style="left:1001.16px;top:296.00px;font-size:13.32px;font-weight:400;color:#454733;letter-spacing:0.048px;-webkit-text-stroke:0.22px #454733;">2024/09/004</span>
<span class="t" style="left:1121.59px;top:296.00px;font-size:13.32px;font-weight:400;color:#454733;letter-spacing:-0.442px;-webkit-text-stroke:0.22px #454733;">€1,442.28</span>
<span class="t" style="left:1226.25px;top:296.00px;font-size:13.32px;font-weight:400;color:#e5463a;letter-spacing:-0.460px;-webkit-text-stroke:0.22px #e5463a;">-€1,442.28</span>
<span class="t" style="left:1331.27px;top:296.00px;font-size:13.32px;font-weight:400;color:#454733;letter-spacing:-0.326px;-webkit-text-stroke:0.22px #454733;">09.10.2024</span>
<span class="t" style="left:1431.16px;top:296.00px;font-size:13.32px;font-weight:400;color:#454733;letter-spacing:-0.314px;-webkit-text-stroke:0.22px #454733;">25.09.2024</span>
<span class="t" style="left:1589.36px;top:298.00px;font-size:11.89px;font-weight:400;color:#fff;letter-spacing:-0.284px;-webkit-text-stroke:0.45px #fff;">Overdue</span>
<span class="t" style="left:314.86px;top:346.00px;font-size:13.32px;font-weight:400;color:#454733;letter-spacing:-0.211px;-webkit-text-stroke:0.22px #454733;">PDF only (380)</span>
<span class="t" style="left:831.00px;top:346.00px;font-size:13.32px;font-weight:400;color:#454733;letter-spacing:-0.500px;-webkit-text-stroke:0.22px #454733;">lissandro AG & Co. KG</span>
<span class="t" style="left:1001.16px;top:346.00px;font-size:13.32px;font-weight:400;color:#454733;letter-spacing:0.088px;-webkit-text-stroke:0.22px #454733;">2024/09/005</span>
<span class="t" style="left:1121.59px;top:346.00px;font-size:13.32px;font-weight:400;color:#454733;letter-spacing:-0.442px;-webkit-text-stroke:0.22px #454733;">€1,442.28</span>
<span class="t" style="left:1226.25px;top:346.00px;font-size:13.32px;font-weight:400;color:#e5463a;letter-spacing:-0.460px;-webkit-text-stroke:0.22px #e5463a;">-€1,442.28</span>
<span class="t" style="left:1331.27px;top:346.00px;font-size:13.32px;font-weight:400;color:#454733;letter-spacing:-0.326px;-webkit-text-stroke:0.22px #454733;">09.10.2024</span>
<span class="t" style="left:1431.16px;top:346.00px;font-size:13.32px;font-weight:400;color:#454733;letter-spacing:-0.314px;-webkit-text-stroke:0.22px #454733;">25.09.2024</span>
<span class="t" style="left:1589.36px;top:348.00px;font-size:11.89px;font-weight:400;color:#fff;letter-spacing:-0.284px;-webkit-text-stroke:0.45px #fff;">Overdue</span>
<span class="t" style="left:314.86px;top:396.00px;font-size:13.32px;font-weight:400;color:#454733;letter-spacing:-0.211px;-webkit-text-stroke:0.22px #454733;">PDF only (389)</span>
<span class="t" style="left:831.00px;top:396.00px;font-size:13.32px;font-weight:400;color:#454733;letter-spacing:-0.500px;-webkit-text-stroke:0.22px #454733;">lissandro AG & Co. KG</span>
<span class="t" style="left:1001.16px;top:396.00px;font-size:13.32px;font-weight:400;color:#454733;letter-spacing:0.083px;-webkit-text-stroke:0.22px #454733;">2023/09/002</span>
<span class="t" style="left:1121.59px;top:396.00px;font-size:13.32px;font-weight:400;color:#454733;letter-spacing:-0.438px;-webkit-text-stroke:0.22px #454733;">€2,884.56</span>
<span class="t" style="left:1226.25px;top:396.00px;font-size:13.32px;font-weight:400;color:#e5463a;letter-spacing:-0.451px;-webkit-text-stroke:0.22px #e5463a;">-€2,884.56</span>
<span class="t" style="left:1331.16px;top:396.00px;font-size:13.32px;font-weight:400;color:#454733;letter-spacing:-0.258px;-webkit-text-stroke:0.22px #454733;">25.09.2023</span>
<span class="t" style="left:1430.69px;top:396.00px;font-size:13.32px;font-weight:400;color:#454733;letter-spacing:-0.103px;-webkit-text-stroke:0.22px #454733;">11.09.2023</span>
<span class="t" style="left:1589.36px;top:398.00px;font-size:11.89px;font-weight:400;color:#fff;letter-spacing:-0.284px;-webkit-text-stroke:0.45px #fff;">Overdue</span>
<span class="t" style="left:314.86px;top:446.00px;font-size:13.32px;font-weight:400;color:#454733;letter-spacing:-0.211px;-webkit-text-stroke:0.22px #454733;">PDF only (380)</span>
<span class="t" style="left:831.00px;top:446.00px;font-size:13.32px;font-weight:400;color:#454733;letter-spacing:-0.500px;-webkit-text-stroke:0.22px #454733;">lissandro AG & Co. KG</span>
<span class="t" style="left:1001.16px;top:446.00px;font-size:13.32px;font-weight:400;color:#454733;letter-spacing:0.089px;-webkit-text-stroke:0.22px #454733;">2023/09/003</span>
<span class="t" style="left:1121.59px;top:446.00px;font-size:13.32px;font-weight:400;color:#454733;letter-spacing:-0.483px;-webkit-text-stroke:0.22px #454733;">€4,326.84</span>
<span class="t" style="left:1226.25px;top:446.00px;font-size:13.32px;font-weight:400;color:#e5463a;letter-spacing:-0.466px;-webkit-text-stroke:0.22px #e5463a;">-€4,326.84</span>
<span class="t" style="left:1331.16px;top:446.00px;font-size:13.32px;font-weight:400;color:#454733;letter-spacing:-0.258px;-webkit-text-stroke:0.22px #454733;">25.09.2023</span>
<span class="t" style="left:1430.69px;top:446.00px;font-size:13.32px;font-weight:400;color:#454733;letter-spacing:-0.103px;-webkit-text-stroke:0.22px #454733;">11.09.2023</span>
<span class="t" style="left:1589.36px;top:448.00px;font-size:11.89px;font-weight:400;color:#fff;letter-spacing:-0.284px;-webkit-text-stroke:0.45px #fff;">Overdue</span>
<span class="t" style="left:314.86px;top:496.00px;font-size:13.32px;font-weight:400;color:#454733;letter-spacing:-0.211px;-webkit-text-stroke:0.22px #454733;">PDF only (380)</span>
<span class="t" style="left:831.00px;top:496.00px;font-size:13.32px;font-weight:400;color:#454733;letter-spacing:-0.500px;-webkit-text-stroke:0.22px #454733;">lissandro AG & Co. KG</span>
<span class="t" style="left:1001.16px;top:496.00px;font-size:13.32px;font-weight:400;color:#454733;letter-spacing:0.080px;-webkit-text-stroke:0.22px #454733;">2023/09/001</span>
<span class="t" style="left:1121.59px;top:496.00px;font-size:13.32px;font-weight:400;color:#454733;letter-spacing:-0.438px;-webkit-text-stroke:0.22px #454733;">€2,884.56</span>
<span class="t" style="left:1226.25px;top:496.00px;font-size:13.32px;font-weight:400;color:#e5463a;letter-spacing:-0.451px;-webkit-text-stroke:0.22px #e5463a;">-€2,884.56</span>
<span class="t" style="left:1331.16px;top:496.00px;font-size:13.32px;font-weight:400;color:#454733;letter-spacing:-0.258px;-webkit-text-stroke:0.22px #454733;">25.09.2023</span>
<span class="t" style="left:1430.69px;top:496.00px;font-size:13.32px;font-weight:400;color:#454733;letter-spacing:-0.103px;-webkit-text-stroke:0.22px #454733;">11.09.2023</span>
<span class="t" style="left:1589.36px;top:498.00px;font-size:11.89px;font-weight:400;color:#fff;letter-spacing:-0.284px;-webkit-text-stroke:0.45px #fff;">Overdue</span>
<span class="t" style="left:1523.87px;top:565.00px;font-size:13.32px;font-weight:400;color:#454733;letter-spacing:-0.314px;-webkit-text-stroke:0.22px #454733;">entries per page</span>
<span class="t" style="left:1632.91px;top:565.00px;font-size:13.32px;font-weight:400;color:#454733;letter-spacing:-0.184px;-webkit-text-stroke:0.22px #454733;">25</span>
<span class="t" style="left:1702.84px;top:565.00px;font-size:13.32px;font-weight:400;color:#454733;letter-spacing:-0.421px;-webkit-text-stroke:0.22px #454733;">1-5 von 5</span>
<span class="t" style="left:9.95px;top:906.00px;font-size:11.79px;font-weight:400;color:#454733;letter-spacing:-0.280px;-webkit-text-stroke:0.22px #454733;">Copyright © 2026 faktoora GmbH</span>
<span class="t" style="left:873.10px;top:907.00px;font-size:11.27px;font-weight:400;color:#454733;letter-spacing:-0.568px;-webkit-text-stroke:0.22px #454733;">IMPRESSUM</span>
<span class="t" style="left:942.68px;top:907.00px;font-size:11.27px;font-weight:400;color:#454733;letter-spacing:0.000px;-webkit-text-stroke:0.22px #454733;">|</span>
<span class="t" style="left:951.00px;top:907.00px;font-size:11.27px;font-weight:400;color:#454733;letter-spacing:-0.566px;-webkit-text-stroke:0.22px #454733;">DATENSCHUTZ</span>
</body></html>
